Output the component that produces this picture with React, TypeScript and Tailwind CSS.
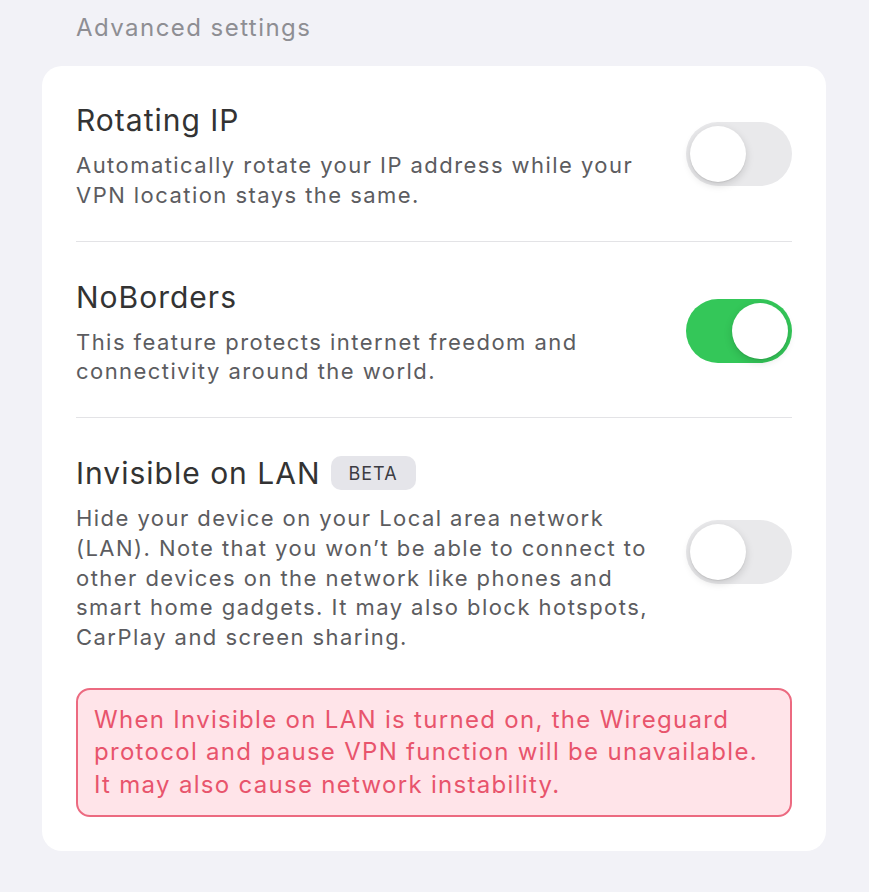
import React from "react";

function Toggle({ on }: { on: boolean }) {
  return (
    <div
      className={
        "relative shrink-0 mb-[4px] w-[106px] h-[64px] rounded-full " +
        (on ? "bg-[#34c759]" : "bg-[#e9e9eb]")
      }
    >
      <div
        className={
          "absolute top-[4px] w-[56px] h-[56px] rounded-full bg-white shadow-[0_3px_8px_rgba(0,0,0,0.15),0_1px_1px_rgba(0,0,0,0.08)] " +
          (on ? "left-[46px]" : "left-[4px]")
        }
      />
    </div>
  );
}

function Row({
  title,
  desc,
  on,
  badge,
}: {
  title: string;
  desc: string;
  on: boolean;
  badge?: string;
}) {
  return (
    <div className="flex items-center justify-between">
      <div className="w-[596px]">
        <div className="flex items-center gap-[10px]">
          <div className="text-[30px] leading-[36px] tracking-[1px] text-[#333333]">{title}</div>
          {badge && (
            <div className="rounded-[10px] bg-[#e5e5ea] w-[85px] h-[34px] flex items-center justify-center text-[18px] tracking-[1px] text-[#3c3c43]">
              {badge}
            </div>
          )}
        </div>
        <div className="mt-[13px] text-[22px] leading-[29.75px] tracking-[1.45px] text-[#5c5c60]">{desc}</div>
      </div>
      <Toggle on={on} />
    </div>
  );
}

export default function App() {
  return (
    <div
      className="min-h-[892px] w-[869px] bg-[#f2f2f7] pt-[10px]"
      style={{ fontFamily: "Inter, 'Noto Sans', sans-serif" }}
    >
      <div className="pl-[76px] text-[24px] leading-[36px] tracking-[1.45px] text-[#8e8e93]">Advanced settings</div>
      <div className="ml-[42px] mt-[20px] w-[784px] rounded-[20px] bg-white px-[34px] pt-[36px] pb-[34px]">
        <Row
          title="Rotating IP"
          desc="Automatically rotate your IP address while your VPN location stays the same."
          on={false}
        />
        <div className="mt-[30px] mb-[37px] h-px bg-[#e3e3e6]" />
        <Row
          title="NoBorders"
          desc="This feature protects internet freedom and connectivity around the world."
          on={true}
        />
        <div className="mt-[30px] mb-[37px] h-px bg-[#e3e3e6]" />
        <Row
          title="Invisible on LAN"
          badge="BETA"
          desc="Hide your device on your Local area network (LAN). Note that you won’t be able to connect to other devices on the network like phones and smart home gadgets. It may also block hotspots, CarPlay and screen sharing."
          on={false}
        />
        <div className="mt-[35px] rounded-[14px] border-2 border-[#ec6a80] bg-[#ffe4e9] pl-[16px] pr-[8px] py-[14px] text-[24px] leading-[32.5px] tracking-[1.3px] text-[#e8546c]">
          When Invisible on LAN is turned on, the Wireguard protocol and pause VPN function will be unavailable. It may also cause network instability.
        </div>
      </div>
    </div>
  );
}
